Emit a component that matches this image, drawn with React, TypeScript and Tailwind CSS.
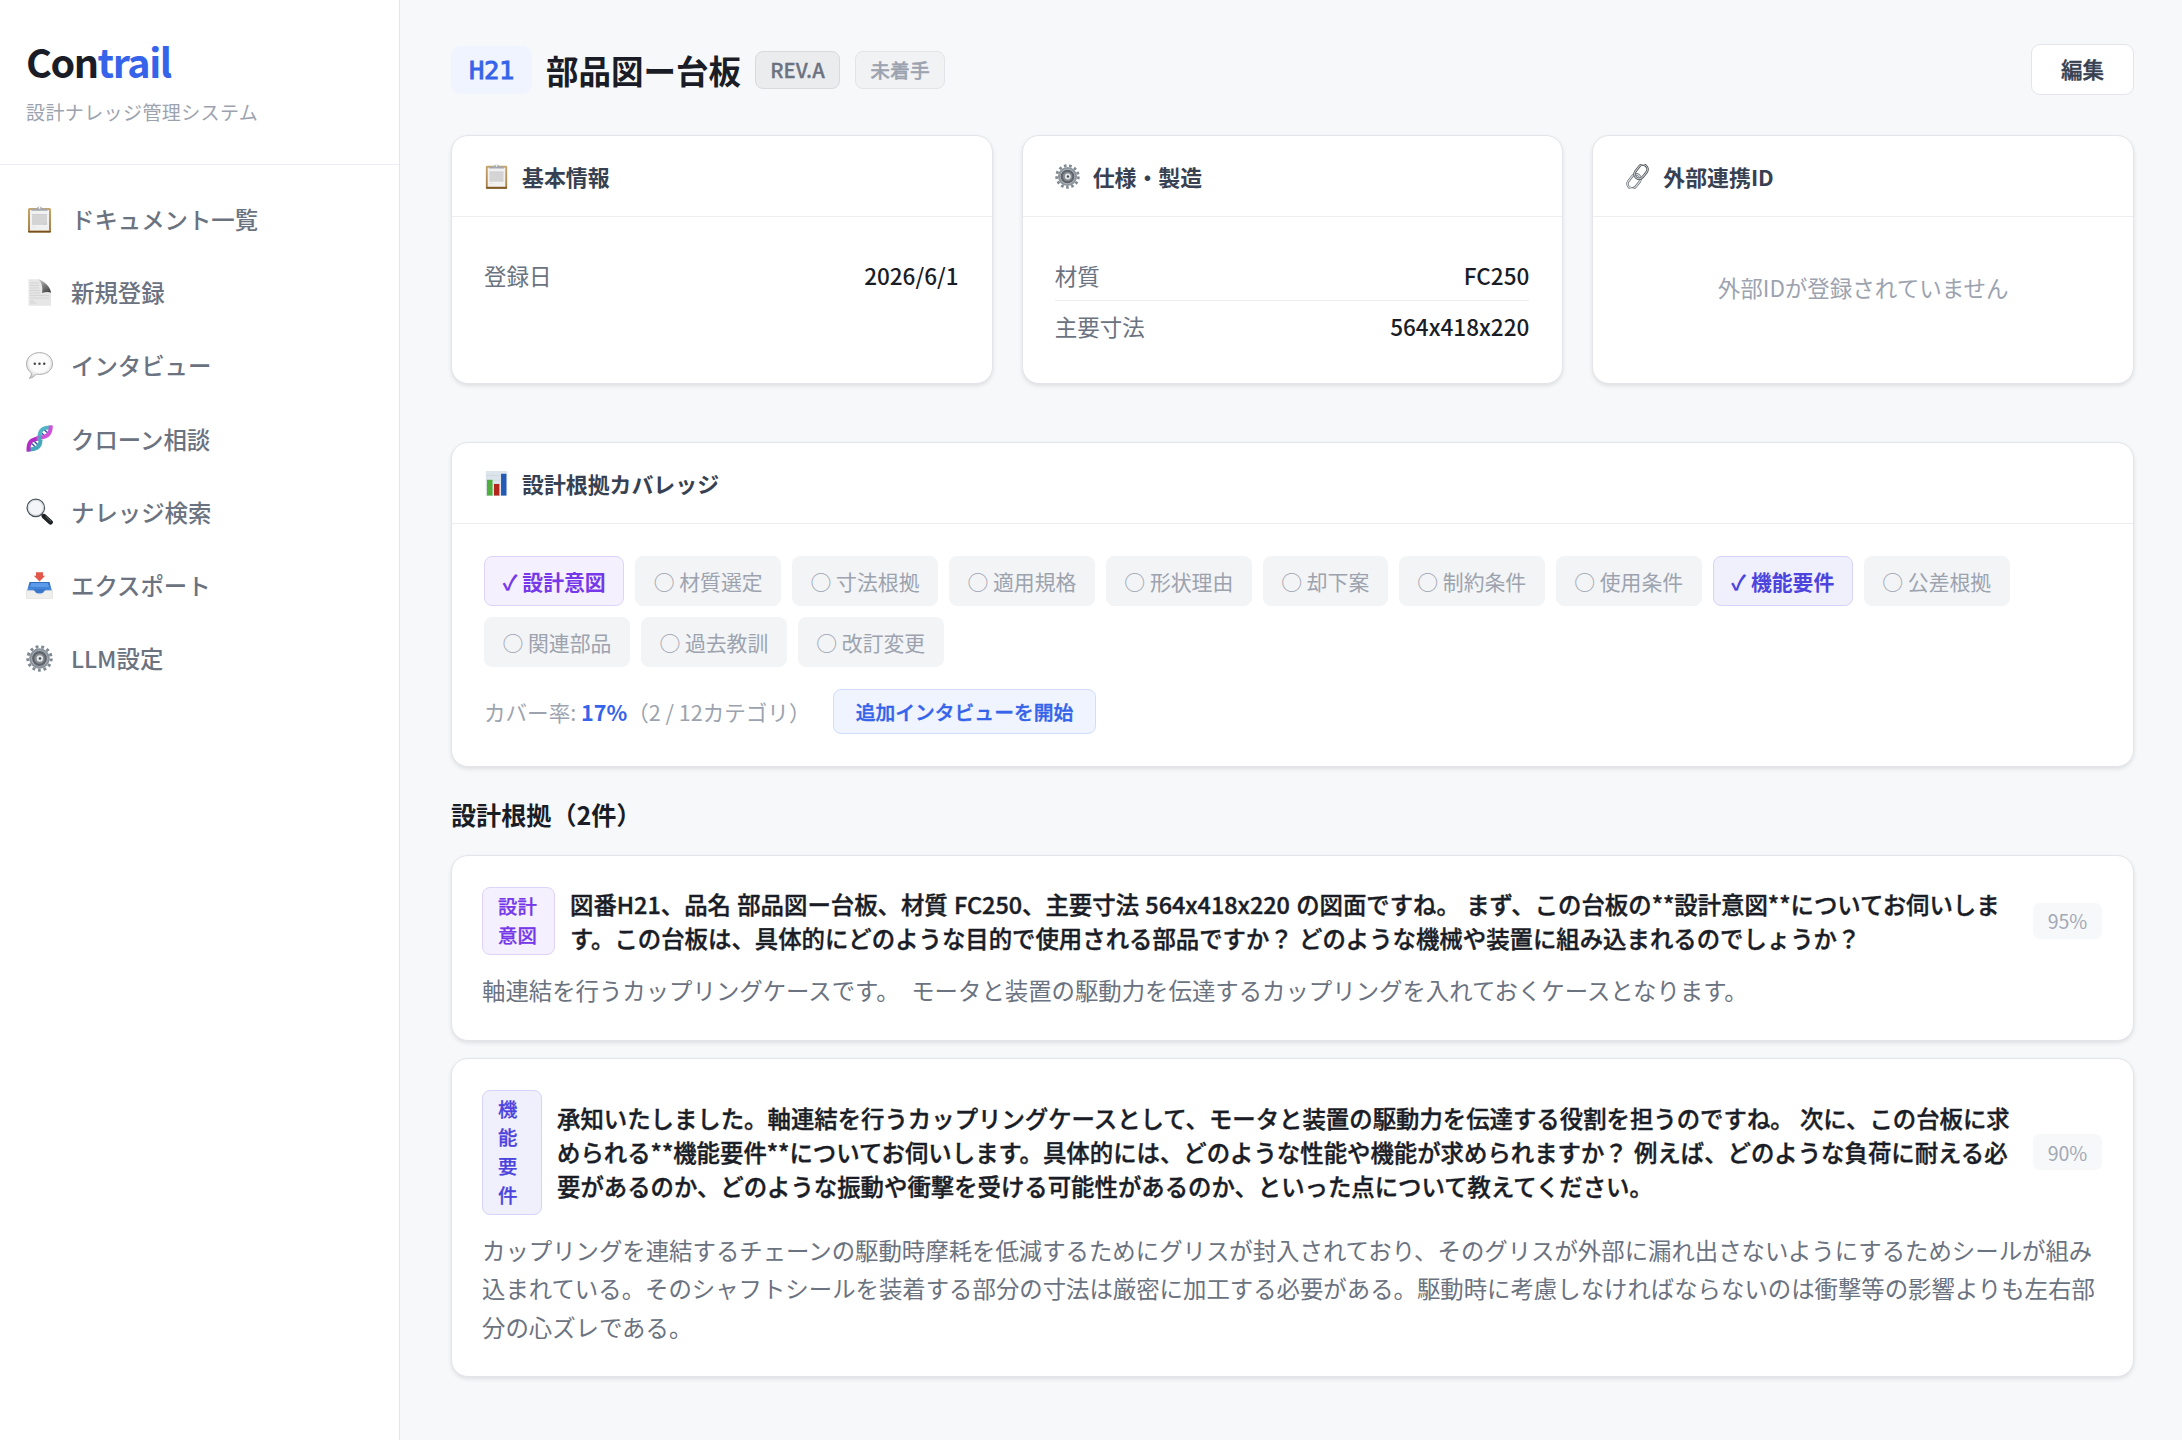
import React from "react";

type IconProps = { className?: string };

const ClipboardIcon: React.FC<IconProps> = ({ className }) => (
  <svg viewBox="0 0 27 27" className={className}>
    <defs>
      <linearGradient id="board" x1="0" y1="0" x2="0" y2="1">
        <stop offset="0" stopColor="#c9a468" />
        <stop offset="1" stopColor="#a57e45" />
      </linearGradient>
    </defs>
    <rect x="2" y="2" width="23" height="24.5" rx="1.5" fill="url(#board)" />
    <rect x="2" y="25" width="23" height="1.6" rx="0.8" fill="#76501f" />
    <rect x="4" y="4" width="19" height="20.5" fill="#f1f1f1" />
    <path d="M6 8h15v11H6z" fill="#cfcfcf" />
    <path d="M6 10h15M6 12h15M6 14h15M6 16h15M6 18h11M6 21h4" stroke="#dedede" strokeWidth="0.7" />
    <path d="M5.500 2.800h4.600L12 .8h3l1.900 2h4.600v2h-16z" fill="#a4a9b0" />
    <circle cx="13.5" cy="1.8" r="1" fill="#fff" />
  </svg>
);

const PageIcon: React.FC<IconProps> = ({ className }) => (
  <svg viewBox="0 0 27 27" className={className}>
    <defs>
      <linearGradient id="fold" x1="0.1" y1="0" x2="0.7" y2="1">
        <stop offset="0" stopColor="#d0d0d0" />
        <stop offset="0.5" stopColor="#808080" />
        <stop offset="1" stopColor="#484848" />
      </linearGradient>
    </defs>
    <path d="M2.5 .2H13.500L25 13v13.8H2.500z" fill="#e6e6e6" />
    <path d="M4 4h9M4 6.5h9M4 9h9M4 11.5h10M4 14h10M4 16.5h19M4 19h19M4 22h4M4 24h6" stroke="#d2d2d2" strokeWidth="0.9" />
    <path d="M12 .2c4.500.5 13 7.500 13 13.500-2.800-1.200-6-.6-8.900.3.900-5.200.1-10.400-4.100-13.800z" fill="url(#fold)" />
    <path d="M15.500.8c4 1.800 8.300 6.200 9.500 10.400V.8z" fill="#fff" />
  </svg>
);

const ChatIcon: React.FC<IconProps> = ({ className }) => (
  <svg viewBox="0 0 27 27" className={className}>
    <defs>
      <radialGradient id="bubble" cx="0.5" cy="0.4" r="0.6">
        <stop offset="0.6" stopColor="#fbfbfb" />
        <stop offset="1" stopColor="#cfcfcf" />
      </radialGradient>
    </defs>
    <path
      d="M13.500.6C20.700.6 26.500 5.400 26.500 11.800S20.700 22.400 13.500 22.400c-1.200 0-2.300-.1-3.300-.4-1.700 2.500-4.200 4.100-7 4.300 1.600-1.300 2.300-3.200 2.100-5.500C2.300 18.800.5 15.600.5 11.800.5 5.400 6.300.6 13.500.6z"
      fill="url(#bubble)"
      stroke="#a6a6a6"
      strokeWidth="0.9"
    />
    <circle cx="8.800" cy="11.800" r="1.200" fill="#444" />
    <circle cx="13.500" cy="11.800" r="1.200" fill="#444" />
    <circle cx="18.200" cy="11.800" r="1.200" fill="#444" />
  </svg>
);

const DnaIcon: React.FC<IconProps> = ({ className }) => (
  <svg viewBox="0 0 27 27" className={className} fill="none">
    <path d="M4.500 17.500l5.500 5M7.500 15.500l5 5M15 7.500l5 4.500M18 4.500l5 4.500" stroke="#3d57a8" strokeWidth="1.500" />
    <path d="M1 24.500c8.500.5 13.500-2 13.500-9.500" stroke="#45a9bb" strokeWidth="4" />
    <path d="M13.500 12c0-8 4.500-10 12.500-9.500" stroke="#52b5c6" strokeWidth="4" />
    <path d="M2.500 26.500C2 17 5 14.500 12.500 13.500" stroke="#b32fc4" strokeWidth="4" />
    <path d="M10.500 13C20.500 12.500 25 10 24.800.5" stroke="#cf52d8" strokeWidth="4" />
    <path d="M13.500 16c.3-1.500.3-3.500.8-5.500" stroke="#45a9bb" strokeWidth="3" />
  </svg>
);

const SearchIcon: React.FC<IconProps> = ({ className }) => (
  <svg viewBox="0 0 27 27" className={className}>
    <path d="M16 16.500l2.500 2" stroke="#777" strokeWidth="2.500" />
    <path d="M18 18.200l6.500 6" stroke="#1f2224" strokeWidth="4.800" strokeLinecap="round" />
    <path d="M19.500 18.300l5.500 5" stroke="#6d7275" strokeWidth="0.9" />
    <circle cx="9.800" cy="9.800" r="8.700" fill="#f3f5f6" stroke="#4c545c" strokeWidth="1.300" />
    <circle cx="9.800" cy="9.800" r="7.500" fill="none" stroke="#c9d0d6" strokeWidth="0.800" />
  </svg>
);

const InboxIcon: React.FC<IconProps> = ({ className }) => (
  <svg viewBox="0 0 27 27" className={className}>
    <defs>
      <linearGradient id="tray" x1="0" y1="0" x2="0" y2="1">
        <stop offset="0" stopColor="#2f68b8" />
        <stop offset="1" stopColor="#4f90e6" />
      </linearGradient>
    </defs>
    <path d="M3.500 10h20l2.500 9H1z" fill="url(#tray)" />
    <path d="M5 11h17l.8 4H4.200z" fill="#5b9bea" />
    <path d="M7 17h13l-2 4.500H9z" fill="#3a76cc" />
    <path d="M.5 18.500h7.200c1.200 0 1.700 3.700 5.800 3.700s4.600-3.700 5.800-3.700h7.200V26q0 .8-.8.8H1.300q-.8 0-.8-.8z" fill="#efefed" stroke="#d4d4d2" strokeWidth="0.500" />
    <path d="M10 .2h7v3.600h2.200L13.500 9.600 7.800 3.800H10z" fill="#e2574b" />
  </svg>
);

const GearIcon: React.FC<IconProps> = ({ className }) => (
  <svg viewBox="0 0 27 27" className={className} fill="none">
    <circle cx="13.500" cy="13.500" r="11.700" stroke="#7f8991" strokeWidth="3" strokeDasharray="2.830 2.824" />
    <circle cx="13.500" cy="13.500" r="9.300" fill="#aab1b8" stroke="#8c949b" strokeWidth="2" />
    <circle cx="13.500" cy="13.500" r="6.300" fill="#868c92" stroke="#5d6369" strokeWidth="2.200" />
    <circle cx="13.800" cy="13.500" r="3.200" fill="#e2e7ea" />
    <circle cx="14" cy="13.500" r="1.300" fill="#4b5157" />
  </svg>
);

const LinkIcon: React.FC<IconProps> = ({ className }) => (
  <svg viewBox="0 0 27 27" className={className} fill="none">
    <g transform="rotate(-52 13.500 13.500)">
      <rect x="-1.200" y="8.800" width="16.500" height="10" rx="5" stroke="#5f656b" strokeWidth="2.700" />
      <rect x="-1.200" y="8.800" width="16.500" height="10" rx="5" stroke="#d5dadd" strokeWidth="1.500" />
      <rect x="11.700" y="8.300" width="16.500" height="10" rx="5" stroke="#45494e" strokeWidth="2.700" />
      <rect x="11.700" y="8.300" width="16.500" height="10" rx="5" stroke="#c3c8cc" strokeWidth="1.200" />
    </g>
  </svg>
);

const ChartIcon: React.FC<IconProps> = ({ className }) => (
  <svg viewBox="0 0 27 27" className={className}>
    <rect x="2" y="0" width="23" height="27" fill="#dce5ec" />
    <path d="M2 5h23M2 10h23M2 15h23M2 20h23" stroke="#c5d2dc" strokeWidth="0.600" />
    <rect x="3.200" y="9.500" width="6" height="17" fill="#4fae3c" />
    <rect x="10.800" y="14" width="5.800" height="12.500" fill="#b3261e" />
    <rect x="18.400" y="3" width="5.800" height="23.500" fill="#2459b5" />
  </svg>
);

const navItems = [
  { icon: ClipboardIcon, label: "ドキュメント一覧" },
  { icon: PageIcon, label: "新規登録" },
  { icon: ChatIcon, label: "インタビュー" },
  { icon: DnaIcon, label: "クローン相談" },
  { icon: SearchIcon, label: "ナレッジ検索" },
  { icon: InboxIcon, label: "エクスポート" },
  { icon: GearIcon, label: "LLM設定" },
];

const categories = [
  { label: "設計意図", active: "border-[#ddd3fb] bg-[#f4f0fe] text-[#7638e8]" },
  { label: "材質選定" },
  { label: "寸法根拠" },
  { label: "適用規格" },
  { label: "形状理由" },
  { label: "却下案" },
  { label: "制約条件" },
  { label: "使用条件" },
  { label: "機能要件", active: "border-[#d5d3f9] bg-[#f0f0fd] text-[#4d43dd]" },
  { label: "公差根拠" },
  { label: "関連部品" },
  { label: "過去教訓" },
  { label: "改訂変更" },
];

const rationales = [
  {
    tag: "設計意図",
    tagStyle: "w-[73px] border-[#ddd3fb] bg-[#f4f0fe] text-[#7638e8]",
    question:
      "図番H21、品名 部品図ー台板、材質 FC250、主要寸法 564x418x220 の図面ですね。 まず、この台板の**設計意図**についてお伺いします。この台板は、具体的にどのような目的で使用される部品ですか？ どのような機械や装置に組み込まれるのでしょうか？",
    answer: "軸連結を行うカップリングケースです。　モータと装置の駆動力を伝達するカップリングを入れておくケースとなります。",
    score: "95%",
  },
  {
    tag: "機能要件",
    tagStyle: "w-[60px] border-[#d5d3f9] bg-[#f0f0fc] text-[#4d43dd]",
    question:
      "承知いたしました。軸連結を行うカップリングケースとして、モータと装置の駆動力を伝達する役割を担うのですね。 次に、この台板に求められる**機能要件**についてお伺いします。具体的には、どのような性能や機能が求められますか？ 例えば、どのような負荷に耐える必要があるのか、どのような振動や衝撃を受ける可能性があるのか、といった点について教えてください。",
    answer:
      "カップリングを連結するチェーンの駆動時摩耗を低減するためにグリスが封入されており、そのグリスが外部に漏れ出さないようにするためシールが組み込まれている。そのシャフトシールを装着する部分の寸法は厳密に加工する必要がある。駆動時に考慮しなければならないのは衝撃等の影響よりも左右部分の心ズレである。",
    score: "90%",
  },
];

type CardProps = {
  icon: React.FC<IconProps>;
  title: string;
  className?: string;
  children: React.ReactNode;
};

const Card: React.FC<CardProps> = ({ icon: Icon, title, className = "", children }) => (
  <section
    className={`rounded-[17px] border border-[#e3e5ea] bg-white shadow-[0_2px_4px_rgba(0,0,0,0.1)] ${className}`}
  >
    <div className="flex h-[81px] items-center gap-[13px] border-b border-[#eceef2] px-8 pt-px">
      <Icon className="size-[25px] shrink-0" />
      <h3 className="text-[21.900px] leading-8 font-semibold text-[#374151]">{title}</h3>
    </div>
    {children}
  </section>
);

const App: React.FC = () => {
  return (
    <div
      lang="ja"
      className="flex h-[1440px] w-[2182px] overflow-hidden bg-[#f7f8fa] font-['Noto_Sans_CJK_JP',sans-serif] text-[#1a1d26]"
    >
      <aside className="w-[400px] shrink-0 border-r border-[#e3e5e9] bg-white">
        <div className="h-[165px] border-b border-[#eceef3] px-[26px] pt-[33px]">
          <h1 className="text-[39.500px] leading-[56px] font-bold tracking-[-1.450px]">
            Con<span className="text-[#3563e9]">trail</span>
          </h1>
          <p className="mt-[8px] text-[19px] leading-[29px] tracking-[0.400px] text-[#9ca3af]">
            設計ナレッジ管理システム
          </p>
        </div>
        <nav className="pt-[17.500px]">
          {navItems.map(({ icon: Icon, label }) => (
            <a key={label} className="flex h-[73.200px] items-center gap-[18px] px-[26px]">
              <Icon className="size-[27px] shrink-0" />
              <span className="text-[23.400px] leading-8 font-medium text-[#6b7280]">{label}</span>
            </a>
          ))}
        </nav>
      </aside>

      <main className="flex-1 pt-11 pr-12 pl-[51px]">
        <header className="flex h-[51px] items-center">
          <span className="flex h-12 w-[81px] items-center justify-center rounded-[9px] bg-[#eff4ff] pt-0.5 font-['DejaVu_Sans_Mono',monospace] text-[25.500px] tracking-[-0.300px] text-[#3563e9] [-webkit-text-stroke:0.900px]">
            H21
          </span>
          <h2 className="ml-[14px] text-[32.500px] leading-[48px] font-bold">部品図ー台板</h2>
          <span className="ml-[14px] flex h-[38px] w-[85px] items-center justify-center rounded-[8px] border border-[#d8dadd] bg-[#ebecee] pt-px text-[20.200px] font-medium text-[#6b7280] [-webkit-text-stroke:0.300px]">
            REV.A
          </span>
          <span className="ml-[15px] flex h-[38px] w-[90px] items-center justify-center rounded-[8px] border border-[#e2e4e7] bg-[#f1f2f4] text-[19.800px] font-medium text-[#9ca3af] [-webkit-text-stroke:0.300px]">
            未着手
          </span>
          <button className="ml-auto h-[51px] w-[103px] rounded-[9px] border border-[#e3e5ea] bg-white text-[21.500px] font-medium text-[#374151] [-webkit-text-stroke:0.400px]">
            編集
          </button>
        </header>

        <div className="mt-10 grid h-[249px] grid-cols-3 gap-[29px]">
          <Card icon={ClipboardIcon} title="基本情報">
            <dl className="py-8 pr-[33px] pl-8 text-[22.500px] leading-[32px]">
              <div className="flex h-[52px] items-center justify-between">
                <dt className="text-[#6b7280]">登録日</dt>
                <dd className="font-medium">2026/6/1</dd>
              </div>
            </dl>
          </Card>
          <Card icon={GearIcon} title="仕様・製造">
            <dl className="py-8 pr-[33px] pl-8 text-[22.500px] leading-[32px]">
              <div className="flex h-[52px] items-center justify-between border-b border-[#eceef2]">
                <dt className="text-[#6b7280]">材質</dt>
                <dd className="font-medium">FC250</dd>
              </div>
              <div className="flex h-[50px] items-center justify-between">
                <dt className="text-[#6b7280]">主要寸法</dt>
                <dd className="font-medium">564x418x220</dd>
              </div>
            </dl>
          </Card>
          <Card icon={LinkIcon} title="外部連携ID">
            <p className="pt-[54px] text-center text-[22.500px] leading-[32px] text-[#9ca3af]">
              外部IDが登録されていません
            </p>
          </Card>
        </div>

        <Card icon={ChartIcon} title="設計根拠カバレッジ" className="mt-[58px] h-[325px]">
          <div className="px-8 pt-8">
            <div className="flex flex-wrap gap-[11px]">
              {categories.map(({ label, active }) => (
                <span
                  key={label}
                  className={`flex h-[50px] items-center rounded-[8px] border px-[17.500px] pt-px text-[20.850px] ${
                    active ? `font-semibold ${active}` : "border-[#f3f4f6] bg-[#f3f4f6] text-[#9ca3af]"
                  }`}
                >
                  {active ? "✓" : "○"} {label}
                </span>
              ))}
            </div>
            <div className="mt-[22px] flex items-center">
              <p className="text-[21.550px] leading-[32px] text-[#9ca3af]">
                カバー率: <strong className="font-semibold text-[#3563e9]">17%</strong>（2 / 12カテゴリ）
              </p>
              <button className="ml-[22.500px] h-[45px] w-[263px] rounded-[8px] border border-[#d0dcfa] bg-[#eff4ff] text-[19.800px] font-medium text-[#3563e9] [-webkit-text-stroke:0.400px]">
                追加インタビューを開始
              </button>
            </div>
          </div>
        </Card>

        <h2 className="mt-[28px] text-[25.100px] leading-[38px] font-semibold">設計根拠（2件）</h2>

        <div className="mt-[22px] flex flex-col gap-[17px]">
          {rationales.map((item) => (
            <article
              key={item.tag}
              className="rounded-[17px] border border-[#e3e5ea] bg-white pt-[30.700px] pr-[31px] pb-[30.300px] pl-[30px] shadow-[0_2px_4px_rgba(0,0,0,0.1)]"
            >
              <div className="flex items-center">
                <span
                  className={`shrink-0 rounded-[8px] border py-[4px] pr-[14px] pl-[15px] text-[19.400px] leading-[28.700px] font-medium [-webkit-text-stroke:0.250px] ${item.tagStyle}`}
                >
                  {item.tag}
                </span>
                <p className="ml-[15px] flex-1 text-[23.400px] leading-[34.200px] font-medium [word-spacing:1px] [-webkit-text-stroke:0.400px]">
                  {item.question}
                </p>
                <span className="ml-4 flex h-9 w-[69px] shrink-0 items-center justify-center rounded-[7px] bg-[#f7f8fa] text-[19.500px] text-[#a3a9b5]">
                  {item.score}
                </span>
              </div>
              <p className="mt-[16.300px] text-[23.400px] leading-[38.400px] text-[#6b7280]">{item.answer}</p>
            </article>
          ))}
        </div>
      </main>
    </div>
  );
};

export default App;
